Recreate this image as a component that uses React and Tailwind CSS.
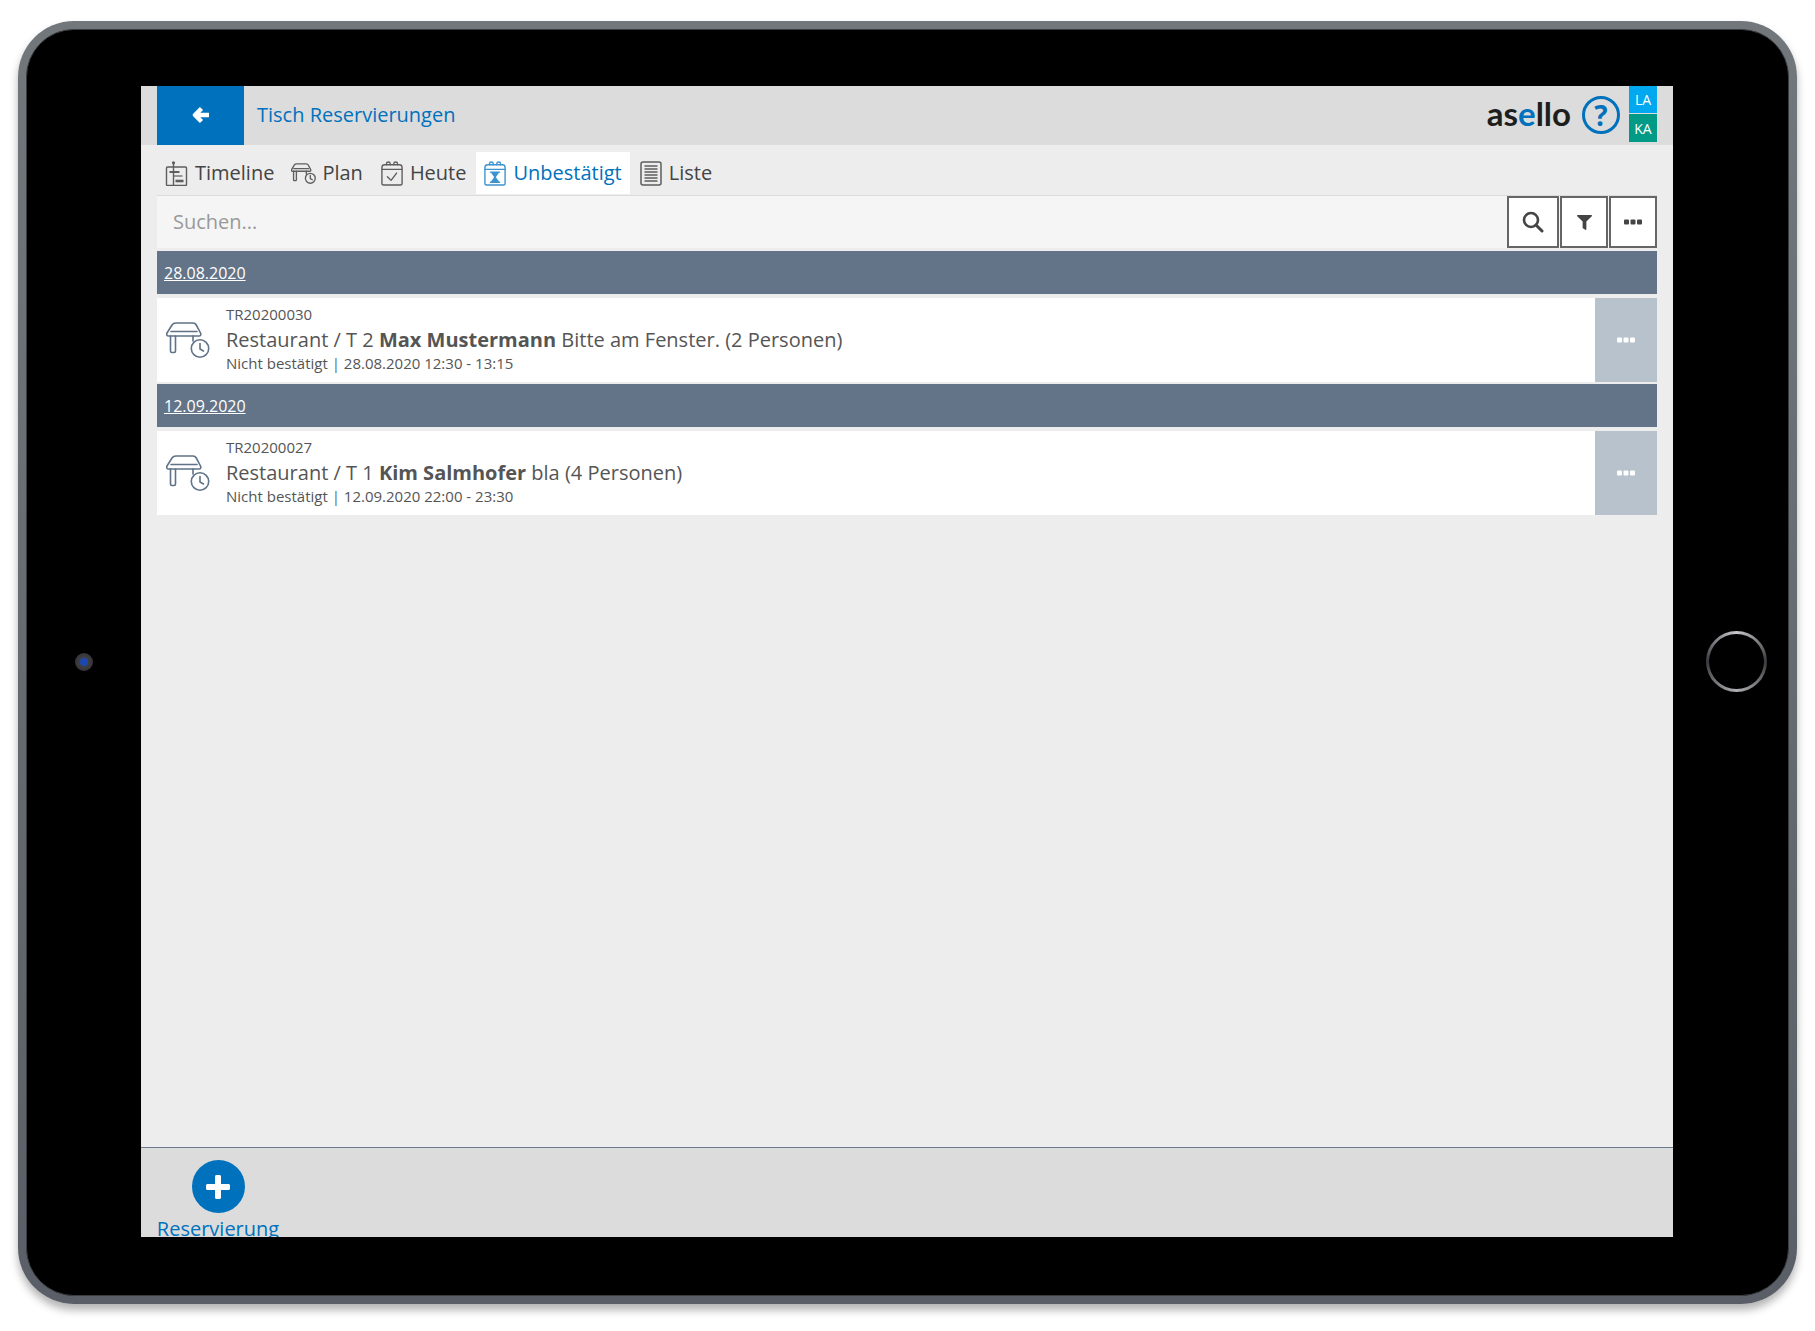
import React from 'react';
import { FaFilter } from 'react-icons/fa';

const reservations = [
    { date: '28.08.2020', id: 'TR20200030', table: 'T 2', name: 'Max Mustermann', note: 'Bitte am Fenster. (2 Personen)', time: '28.08.2020 12:30 - 13:15' },
    { date: '12.09.2020', id: 'TR20200027', table: 'T 1', name: 'Kim Salmhofer', note: 'bla (4 Personen)', time: '12.09.2020 22:00 - 23:30' },
];

const TimelineIcon = () => (
    <svg width="23" height="25" viewBox="0 0 22 25" fill="none" stroke="currentColor" className="block">
        <rect x="1" y="6" width="20" height="18.500" rx="1" strokeWidth="1.4" />
        <path d="M8 1v23.500" strokeWidth="1.4" />
        <circle cx="8" cy="1.800" r="1.600" fill="currentColor" stroke="none" />
        <path d="M4 11h10" strokeWidth="2" />
        <path d="M8 15h9" strokeWidth="1.2" />
        <path d="M10 20h8" strokeWidth="2.600" />
    </svg>
);

const TableIcon = ({ width, height, clockFill = 'white', strokeWidth = 1.6, className = '' }) => (
    <svg width={width} height={height} viewBox="0 0 44 36" fill="none" stroke="currentColor" strokeWidth={strokeWidth} strokeLinejoin="round" strokeLinecap="round" className={`block ${className}`}>
        <path d="M10 1h17c1.500 0 2.500.5 3.300 2l4.200 8c.8 1.500 0 3-1.500 3H2.500C1 14 .2 12.500 1 11l5-8c.9-1.500 2-2 4-2z" />
        <path d="M5 9.500h26" />
        <path d="M4.500 14v15c0 1 .7 1.500 1.500 1.500h2c.8 0 1.500-.5 1.500-1.500V14" />
        <path d="M27 14v5" />
        <circle cx="34" cy="26.500" r="8.700" fill={clockFill} />
        <path d="M34 21.500v5.500l3.500 2" />
    </svg>
);

const CalendarShell = ({ children }) => (
    <svg width="22" height="25" viewBox="0 0 24 27" fill="none" stroke="currentColor" strokeWidth="1.500" strokeLinecap="round" strokeLinejoin="round" className="block">
        <path d="M1 7c0-2 1-3 3-3h16c2 0 3 1 3 3v17c0 1.500-1 2-2 2H3c-1 0-2-.5-2-2V7z" />
        <path d="M1 9h22" />
        <path d="M6 4V2.500c0-2 4-2 4 0V4M14 4V2.500c0-2 4-2 4 0V4" />
        {children}
    </svg>
);

const ListIcon = () => (
    <svg width="22" height="25" viewBox="0 0 22 25" fill="none" stroke="currentColor" className="block">
        <rect x="1" y="1" width="20" height="23" rx="2" strokeWidth="1.500" />
        <path d="M4.500 5h13M4.500 8h13M4.500 11h13M4.500 14h13M4.500 17h13M4.500 20h13" strokeWidth="1.500" />
    </svg>
);

const Dots = () => (
    <svg width="18" height="6" viewBox="0 0 18 6" fill="currentColor" className="block">
        <rect x="0" y="0.500" width="5" height="5" rx="1" />
        <rect x="6.500" y="0.500" width="5" height="5" rx="1" />
        <rect x="13" y="0.500" width="5" height="5" rx="1" />
    </svg>
);

const Tab = ({ icon, label, active }) => (
    <div className={`flex items-center gap-[7px] h-[42px] px-2 text-[20px] ${active ? 'bg-white text-[#0071bc]' : 'text-[#444]'}`}>
        <span className={active ? 'text-[#3c93d0]' : 'text-[#5e5e5e]'}>{icon}</span>
        {label}
    </div>
);

const ToolButton = ({ width, children }) => (
    <button className={`flex items-center justify-center h-[52px] ${width} bg-white border-2 border-[#666] text-[#444]`}>
        {children}
    </button>
);

function DateGroup({ item }) {
    return (
        <div>
            <div className="flex items-center h-[43px] mb-[4px] pl-[7px] bg-[#637488] text-white text-[16px] underline">
                {item.date}
            </div>
            <div className="flex h-[84px] mb-[2px] bg-white">
                <div className="flex items-center w-[69px] pl-[9px] text-[#5f7287]">
                    <TableIcon width={44} height={36} />
                </div>
                <div className="flex flex-1 flex-col justify-center pb-[3px] text-[#555]">
                    <div className="text-[15px] leading-[21px]">{item.id}</div>
                    <div className="text-[20px] leading-[29px]">
                        Restaurant / {item.table} <b>{item.name}</b> {item.note}
                    </div>
                    <div className="text-[15px] leading-[19px]">
                        Nicht bestätigt <span className="text-[#4a6a8a]">|</span> {item.time}
                    </div>
                </div>
                <div className="flex items-center justify-center w-[62px] bg-[#b8c2cc] text-white">
                    <Dots />
                </div>
            </div>
        </div>
    );
}

export default function App() {
    return (
        <div className="min-h-screen bg-white pt-[21px] pl-[18px] font-['Open_Sans',sans-serif]">
            {/* tablet frame */}
            <div className="w-[1779px] h-[1283px] p-[8px] rounded-[56px] bg-gradient-to-b from-[#72777c] to-[#5a5f67] shadow-[0_6px_8px_rgba(0,0,0,0.3)]">
                <div className="flex h-full rounded-[48px] border border-[#3a3d40] bg-black">
                    <div className="flex w-[114px] items-center justify-center pb-[2px]">
                        <div className="flex items-center justify-center w-[18px] h-[18px] rounded-full bg-[radial-gradient(circle,#4a4a4e,#2c2c30)]">
                            <div className="w-[8px] h-[8px] rounded-full bg-[#1a48b0]" />
                        </div>
                    </div>

                    <div className="flex w-[1532px] flex-col mt-[56px] mb-[58px] bg-[#ededed] overflow-hidden">
                        <header className="flex h-[59px] pl-4 bg-[#dcdcdc]">
                            <div className="flex w-[87px] items-center justify-center pb-[2px] bg-[#0071bc] text-white">
                                <svg width="18" height="18" viewBox="0 0 18 18" fill="none" stroke="currentColor" strokeWidth="4.500" strokeLinejoin="round" className="block">
                                    <path d="M9.500 2.500L3 9l6.500 6.500M3.500 9H17" />
                                </svg>
                            </div>
                            <div className="flex flex-1 items-center pb-[2px] pl-[13px] text-[20px] text-[#0071bc]">Tisch Reservierungen</div>
                            <div className="flex items-center pb-[4px] text-[33px] leading-none font-['Lato',sans-serif] text-[#1e1e1e] font-bold">
                                as<span className="text-[#0071bc]">e</span>llo
                            </div>
                            <div className="flex items-center justify-center self-center w-[38px] h-[38px] mb-[2px] ml-[11px] rounded-full border-[3px] border-[#0071bc] text-[28px] font-bold text-[#0071bc]">?</div>
                            <div className="flex w-[28px] flex-col gap-px ml-[9px] mr-4 text-[14px] text-white">
                                <div className="flex h-[27px] items-center justify-center bg-[#00a8f0]">LA</div>
                                <div className="flex h-[28px] items-center justify-center bg-[#009a86]">KA</div>
                            </div>
                        </header>

                        <div className="flex flex-1 flex-col px-4">
                            <nav className="flex h-[51px] items-end gap-[2px] pb-px border-b border-[#dcdcdc]">
                                <Tab icon={<TimelineIcon />} label="Timeline" />
                                <Tab icon={<TableIcon width={25} height={21} clockFill="none" strokeWidth={2.4} className="-mx-px" />} label="Plan" />
                                <Tab icon={<CalendarShell><path d="M7 17l4 4 6-8" /></CalendarShell>} label="Heute" />
                                <Tab
                                    active
                                    icon={
                                        <CalendarShell>
                                            <path d="M7 12h10M7 23h10" />
                                            <path d="M8.500 12.500h7L12 17.500zM12 17.500l3.500 5h-7z" fill="currentColor" />
                                        </CalendarShell>
                                    }
                                    label="Unbestätigt"
                                />
                                <Tab icon={<ListIcon />} label="Liste" />
                            </nav>

                            <div className="flex h-[52px] mb-[3px] bg-[#f5f5f5]">
                                <input placeholder="Suchen..." className="flex-1 pl-4 text-[20px] outline-none placeholder:text-[#999]" />
                                <div className="flex gap-px">
                                    <ToolButton width="w-[52px]">
                                        <svg width="22" height="22" viewBox="0 0 22 22" fill="none" stroke="currentColor" className="block">
                                            <circle cx="9" cy="9" r="7" strokeWidth="2.600" />
                                            <path d="M14 14l6 6" strokeWidth="3" strokeLinecap="round" />
                                        </svg>
                                    </ToolButton>
                                    <ToolButton width="w-[48px]"><FaFilter size={15} /></ToolButton>
                                    <ToolButton width="w-[48px]"><Dots /></ToolButton>
                                </div>
                            </div>

                            {reservations.map((item) => (
                                <DateGroup key={item.id} item={item} />
                            ))}
                        </div>

                        <footer className="flex h-[90px] flex-col border-t border-[#6a7b8c] bg-[#dcdcdc] pl-4">
                            <div className="flex w-[122px] flex-col items-center pt-[12px] text-[20px] leading-[27px] text-[#0071bc]">
                                <div className="flex items-center justify-center w-[53px] h-[53px] mb-[2px] rounded-full bg-[#0071bc] text-white">
                                    <svg width="24" height="24" viewBox="0 0 24 24" fill="currentColor" className="block">
                                        <path d="M9 1.500c0-.8.7-1.500 1.500-1.500h3c.8 0 1.500.7 1.500 1.500V9h7.500c.8 0 1.500.7 1.500 1.500v3c0 .8-.7 1.500-1.500 1.500H15v7.500c0 .8-.7 1.500-1.500 1.500h-3c-.8 0-1.500-.7-1.500-1.500V15H1.500C.7 15 0 14.300 0 13.500v-3C0 9.700.7 9 1.500 9H9V1.500z" />
                                    </svg>
                                </div>
                                Reservierung
                            </div>
                        </footer>
                    </div>

                    <div className="flex flex-1 items-center pl-[33px] pb-[2px]">
                        <div className="w-[61px] h-[61px] p-[3px] rounded-full bg-[conic-gradient(#c8c8cc,#3a3a3e_25%,#b0b0b4_50%,#3a3a3e_75%,#c8c8cc)]">
                            <div className="w-full h-full rounded-full bg-black" />
                        </div>
                    </div>
                </div>
            </div>
        </div>
    );
}
